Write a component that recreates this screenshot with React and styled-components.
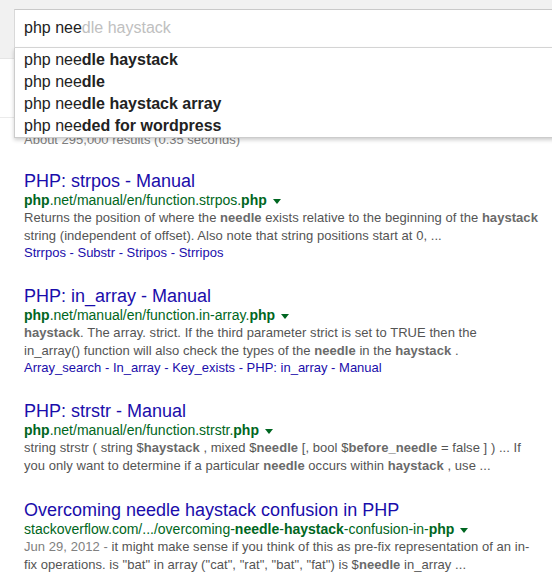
import React from "react";
import styled, { createGlobalStyle } from "styled-components";

const Global = createGlobalStyle`
  html, body { margin: 0; padding: 0; background: #fff; overflow: hidden; }
  body { font-family: Arial, "Liberation Sans", sans-serif; }
`;

const Page = styled.div`
  width: 552px;
  height: 585px;
  overflow: hidden;
  position: relative;
`;

const Header = styled.div`
  box-sizing: border-box;
  height: 59px;
  padding: 9px 0 0 14px;
  background: #f1f1f1;
  border-bottom: 1px solid #e5e5e5;
`;

const SearchWrap = styled.div`
  position: relative;
  width: 600px;
  z-index: 5;
`;

const SearchBox = styled.div`
  box-sizing: border-box;
  height: 39px;
  background: #fff;
  border: 1px solid #d9d9d9;
  border-top-color: #c9c9c9;
  padding: 0 9px 2px;
  display: flex;
  align-items: center;
  font-size: 16px;
  color: #222;
`;

const Typed = styled.span`
  color: #222;
`;

const Hint = styled.span`
  color: #c0c0c0;
`;

const Suggestions = styled.ul`
  position: absolute;
  top: 100%;
  left: 0;
  right: 0;
  margin: 0;
  padding: 1px 0 0;
  list-style: none;
  background: #fff;
  border: 1px solid #ccc;
  border-top: none;
  box-shadow: 0 2px 4px rgba(0, 0, 0, 0.2);
`;

const Suggestion = styled.li`
  height: 22px;
  line-height: 22px;
  padding-left: 9px;
  font-size: 16px;
  color: #222;
  b { font-weight: bold; }
`;

const NavBar = styled.div`
  height: 59px;
  box-sizing: border-box;
  border-bottom: 1px solid #ebebeb;
`;

const Results = styled.div`
  padding: 13px 0 0 24px;
  display: flex;
  flex-direction: column;
  gap: 24px;
`;

const Stats = styled.div`
  font-size: 13px;
  line-height: 18px;
  color: #808080;
  margin-bottom: -3px;
`;

const Result = styled.div`
  display: flex;
  flex-direction: column;
`;

const Title = styled.a`
  font-size: 18px;
  line-height: 22px;
  color: #1a0dab;
  text-decoration: none;
  white-space: nowrap;
`;

const Url = styled.div`
  font-size: 14px;
  line-height: 17px;
  color: #006621;
  white-space: nowrap;
  display: flex;
  align-items: center;
  b { font-weight: bold; }
`;

const Caret = styled.span`
  display: inline-block;
  width: 0;
  height: 0;
  margin-left: 6px;
  margin-top: 1px;
  border-top: 5px solid #006621;
  border-left: 4px solid transparent;
  border-right: 4px solid transparent;
`;

const Snippet = styled.div`
  font-size: 13px;
  line-height: 18px;
  letter-spacing: 0.05px;
  color: #545454;
  b { color: #6a6a6a; font-weight: bold; }
`;

const Line = styled.span`
  display: block;
  white-space: nowrap;
`;

const DateText = styled.span`
  color: #808080;
`;

const SiteLinks = styled.div`
  font-size: 13px;
  line-height: 16px;
  white-space: nowrap;
`;

const SiteLink = styled.a`
  color: #1a0dab;
  text-decoration: none;
`;

const Sep = styled.span`
  color: #1a0dab;
`;

function Links({ items }) {
  return (
    <SiteLinks>
      {items.map((t, i) => (
        <React.Fragment key={t}>
          {i > 0 && <Sep> - </Sep>}
          <SiteLink href="#">{t}</SiteLink>
        </React.Fragment>
      ))}
    </SiteLinks>
  );
}

export default function App() {
  return (
    <Page>
      <Global />
      <Header>
        <SearchWrap>
          <SearchBox>
            <Typed>php nee</Typed>
            <Hint>dle haystack</Hint>
          </SearchBox>
          <Suggestions>
            <Suggestion>php nee<b>dle haystack</b></Suggestion>
            <Suggestion>php nee<b>dle</b></Suggestion>
            <Suggestion>php nee<b>dle haystack array</b></Suggestion>
            <Suggestion>php nee<b>ded for wordpress</b></Suggestion>
          </Suggestions>
        </SearchWrap>
      </Header>
      <NavBar />
      <Results>
        <Stats>About 295,000 results (0.35 seconds)</Stats>

        <Result>
          <Title href="#">PHP: strpos - Manual</Title>
          <Url>
            <span><b>php</b>.net/manual/en/function.strpos.<b>php</b></span>
            <Caret />
          </Url>
          <Snippet>
            <Line>Returns the position of where the <b>needle</b> exists relative to the beginning of the <b>haystack</b></Line>
            <Line>string (independent of offset). Also note that string positions start at 0, ...</Line>
          </Snippet>
          <Links items={["Strrpos", "Substr", "Stripos", "Strripos"]} />
        </Result>

        <Result>
          <Title href="#">PHP: in_array - Manual</Title>
          <Url>
            <span><b>php</b>.net/manual/en/function.in-array.<b>php</b></span>
            <Caret />
          </Url>
          <Snippet>
            <Line><b>haystack</b>. The array. strict. If the third parameter strict is set to TRUE then the</Line>
            <Line>in_array() function will also check the types of the <b>needle</b> in the <b>haystack</b> .</Line>
          </Snippet>
          <Links items={["Array_search", "In_array", "Key_exists", "PHP: in_array - Manual"]} />
        </Result>

        <Result>
          <Title href="#">PHP: strstr - Manual</Title>
          <Url>
            <span><b>php</b>.net/manual/en/function.strstr.<b>php</b></span>
            <Caret />
          </Url>
          <Snippet>
            <Line>string strstr ( string $<b>haystack</b> , mixed $<b>needle</b> [, bool $<b>before_needle</b> = false ] ) ... If</Line>
            <Line>you only want to determine if a particular <b>needle</b> occurs within <b>haystack</b> , use ...</Line>
          </Snippet>
        </Result>

        <Result>
          <Title href="#">Overcoming needle haystack confusion in PHP</Title>
          <Url>
            <span>stackoverflow.com/.../overcoming-<b>needle</b>-<b>haystack</b>-confusion-in-<b>php</b></span>
            <Caret />
          </Url>
          <Snippet>
            <Line><DateText>Jun 29, 2012 - </DateText>it might make sense if you think of this as pre-fix representation of an in-</Line>
            <Line>fix operations. is "bat" in array ("cat", "rat", "bat", "fat") is $<b>needle</b> in_array ...</Line>
          </Snippet>
        </Result>
      </Results>
    </Page>
  );
}
